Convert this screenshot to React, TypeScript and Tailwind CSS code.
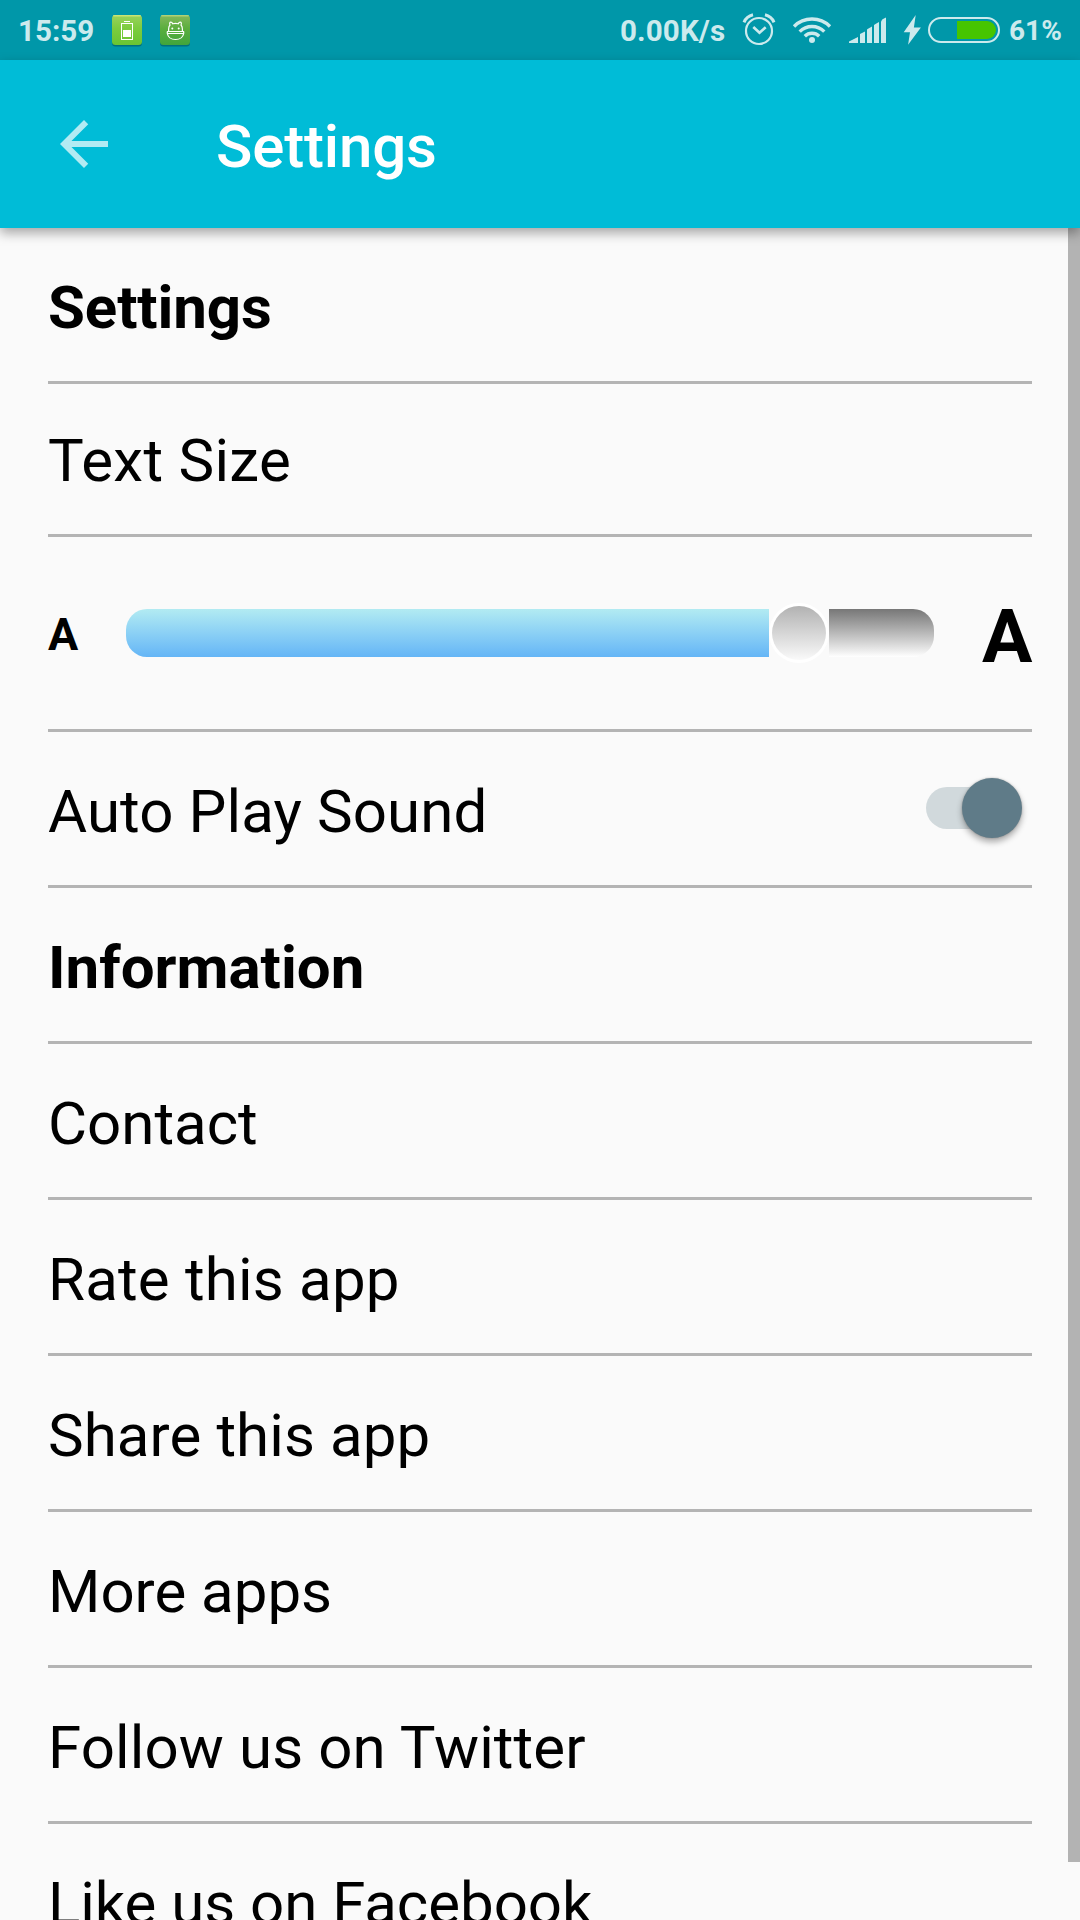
import type { ReactNode } from "react";

const TINT = "#cceaed";

function BatteryAppIcon() {
  return (
    <svg className="ml-[16px] block h-[40px] w-[36px] shrink-0" viewBox="109 10 36 40">
      <defs>
        <linearGradient id="lime" x1="0" y1="0" x2="0" y2="1">
          <stop offset="0" stopColor="#9ad25c" />
          <stop offset="0.45" stopColor="#7ccc3e" />
          <stop offset="1" stopColor="#69c433" />
        </linearGradient>
      </defs>
      <rect x="112" y="16.500" width="30" height="30" rx="3.5" fill="#00505c" opacity="0.55" />
      <rect x="112" y="15" width="30" height="30" rx="3.5" fill="url(#lime)" />
      <rect x="113" y="15" width="28" height="1.4" rx="0.7" fill="#d3e87c" opacity="0.8" />
      <rect x="124" y="21" width="6" height="1" fill="#fff" />
      <rect x="121.5" y="23.5" width="11" height="16" fill="none" stroke="#fff" strokeWidth="1" />
      <rect x="123" y="30" width="8" height="7" fill="#fff" />
    </svg>
  );
}

function AndroidAppIcon() {
  return (
    <svg className="ml-[12px] block h-[40px] w-[36px] shrink-0" viewBox="157 10 36 40">
      <defs>
        <linearGradient id="moss" x1="0" y1="0" x2="0" y2="1">
          <stop offset="0" stopColor="#84b85c" />
          <stop offset="0.45" stopColor="#5bae3e" />
          <stop offset="1" stopColor="#40a53c" />
        </linearGradient>
      </defs>
      <rect x="160" y="16.500" width="30" height="30" rx="3.5" fill="#00505c" opacity="0.55" />
      <rect x="160" y="15" width="30" height="30" rx="3.5" fill="url(#moss)" />
      <rect x="161" y="15" width="28" height="1.4" rx="0.7" fill="#c3dc80" opacity="0.7" />
      <g fill="none" stroke="#fff" strokeWidth="1.2">
        <path d="M168.600 31.500v-2.500c0-1.500.5-3 1.400-4-.8-1.500-.3-2.800.8-2.800.9 0 1.500.6 1.900 1.600 1.600-.5 4-.5 5.600 0 .4-1 1-1.600 1.900-1.600 1.100 0 1.600 1.300.8 2.800.9 1 1.400 2.500 1.400 4v2.500" />
        <path d="M167 31.500h17M167 33.500h17" />
        <path d="M167.300 31.500v2c.8 4 4 6 8.200 6s7.400-2 8.200-6v-2" />
      </g>
      <circle cx="172.300" cy="28.500" r="1" fill="#fff" />
      <circle cx="178.700" cy="28.500" r="1" fill="#fff" />
    </svg>
  );
}

function AlarmIcon() {
  return (
    <svg className="ml-[17px] block h-[34px] w-[34px] shrink-0" viewBox="742 13 34 34" fill="none" stroke={TINT}>
      <circle cx="759" cy="31" r="13" strokeWidth="2.200" />
      <path d="M753.300 27l6.200 5.800 6.200-5.500" strokeWidth="2.600" />
      <path d="M744 22.300c1.500-3.500 5-6.600 9-7.500M774 22.300c-1.500-3.500-5-6.600-9-7.500" strokeWidth="3" />
    </svg>
  );
}

function WifiIcon() {
  return (
    <svg className="ml-[16px] block h-[30px] w-[40px] shrink-0" viewBox="792 15 40 30" fill="none" stroke={TINT} strokeWidth="3.400">
      <path d="M794 26.500a25.500 25.500 0 0 1 36 0" />
      <path d="M799.700 31.600a17.400 17.400 0 0 1 24.600 0" />
      <path d="M804.800 36.300a10.200 10.200 0 0 1 14.400 0" />
      <circle cx="812" cy="40" r="3" fill={TINT} stroke="none" />
    </svg>
  );
}

function SignalIcon() {
  return (
    <svg className="ml-[17px] block h-[26px] w-[38px] shrink-0" viewBox="849 17 38 26" fill={TINT}>
      <path d="M849 43v-1.600l9-4.400v6z" />
      <path d="M860 43v-9l1.500-.7 3.500-1.800V43z" />
      <path d="M867 43V29.500l1.500-1.100 3.500-1.800V43z" />
      <path d="M874 43V25l1.500-1.100 3.500-1.800V43z" />
      <path d="M881 43V21.500l1.500-2.300 3.500-1.600V43z" />
    </svg>
  );
}

function BoltIcon() {
  return (
    <svg className="ml-[16px] block h-[30px] w-[18px] shrink-0" viewBox="903 15 18 30" fill={TINT}>
      <path d="M915.700 15L903.700 32.200h6.300l-1.900 12.600L920.900 27.600h-7z" />
    </svg>
  );
}

function BatteryIcon() {
  return (
    <svg className="ml-[7px] block h-[26px] w-[72px] shrink-0" viewBox="928 17 72 26">
      <rect x="929" y="18" width="70" height="24" rx="12" fill="none" stroke={TINT} strokeWidth="2" />
      <path d="M957 21h30a9 9 0 0 1 0 18h-30z" fill="#46c500" />
    </svg>
  );
}

function StatusBar() {
  return (
    <div className="flex h-[60px] items-center justify-between bg-[#0097a9] pl-[18px] pr-[18px] font-bold leading-[40px] text-[#cceaed]">
      <div className="flex h-[60px] items-center">
        <span className="mt-[2px] w-[75px] whitespace-nowrap text-[29.6px]">15:59</span>
        <BatteryAppIcon />
        <AndroidAppIcon />
      </div>
      <div className="flex h-[60px] items-center">
        <span className="mt-[2px] w-[105px] whitespace-nowrap text-[29.6px] tracking-[0.1px]">0.00K/s</span>
        <AlarmIcon />
        <WifiIcon />
        <SignalIcon />
        <BoltIcon />
        <BatteryIcon />
        <span className="ml-[9px] mt-[2px] w-[53px] whitespace-nowrap text-[28px]">61%</span>
      </div>
    </div>
  );
}

function AppBar() {
  return (
    <header className="relative z-10 flex h-[168px] bg-[#00bcd7] shadow-[0_5px_11px_rgba(0,0,0,0.34)]">
      <svg className="ml-[60px] mt-[60px] block h-[48px] w-[48px]" viewBox="0 0 16 16" fill="#b2ebf3">
        <path d="M16 7H3.830l5.590-5.590L8 0 0 8l8 8 1.410-1.410L3.830 9H16z" />
      </svg>
      <h1 className="ml-[108px] mt-[52px] text-[60px] font-medium leading-[70px] tracking-[-0.15px] text-white">
        Settings
      </h1>
    </header>
  );
}

function Row({ label, className = "font-normal", children }: { label: string; className?: string; children?: ReactNode }) {
  return (
    <div className="flex h-[156px] shrink-0 justify-between border-b-[3px] border-[#b4b4b4] pt-[45px]">
      <span className={className}>{label}</span>
      {children}
    </div>
  );
}

function Toggle() {
  return (
    <div className="relative mr-[10px] mt-[10px] h-[42px] w-[96px]">
      <div className="h-[42px] w-[75px] rounded-full bg-[#d1d9dc]" />
      <div className="absolute right-[0.4px] top-[-8.6px] size-[60px] rounded-full bg-[#5f7b88] shadow-[0_4px_6px_rgba(0,0,0,0.32),0_0_2px_rgba(0,0,0,0.25)]" />
    </div>
  );
}

function TextSizeSlider() {
  return (
    <div className="flex h-[195px] shrink-0 border-b-[3px] border-[#b4b4b4]">
      <span className="mt-[71px] w-[30px] text-[45px] font-bold leading-[53px]">A</span>
      <div className="ml-[48px] mt-[66px] flex h-[60px] w-[808px] items-center">
        <div className="h-[48px] w-[643px] rounded-l-[21px] bg-linear-to-b from-[#b2ebf2] to-[#64b5f6]" />
        <div className="size-[60px] rounded-full bg-white p-[3px]">
          <div className="size-[54px] rounded-full bg-linear-to-b from-[#b2b2b2] to-[#fafafa]" />
        </div>
        <div className="h-[48px] w-[105px] rounded-r-[21px] bg-linear-to-b from-[#777777] to-white" />
      </div>
      <span className="ml-[48px] mt-[55px] text-[75px] font-bold leading-[88px]">A</span>
    </div>
  );
}

const LINKS = [
  { label: "Contact", className: "font-normal" },
  { label: "Rate this app", className: "font-normal tracking-[0.2px]" },
  { label: "Share this app", className: "font-normal tracking-[0.1px]" },
  { label: "More apps", className: "font-normal" },
  { label: "Follow us on Twitter", className: "font-normal tracking-[0.12px]" },
  { label: "Like us on Facebook", className: "font-normal tracking-[-0.04px]" },
];

export default function App() {
  return (
    <div className="flex h-[1920px] w-[1080px] flex-col overflow-hidden bg-[#fafafa] font-['Roboto',sans-serif] text-black">
      <StatusBar />
      <AppBar />
      <div className="flex h-[1692px] overflow-hidden">
        <main className="ml-[48px] flex w-[984px] flex-col text-[60px] leading-[70px]">
          <Row label="Settings" className="font-bold tracking-[-0.1px]" />
          <div className="h-[153px] shrink-0 border-b-[3px] border-[#b4b4b4] pt-[42px] tracking-[0.3px]">Text Size</div>
          <TextSizeSlider />
          <Row label="Auto Play Sound" className="font-normal tracking-[0.1px]">
            <Toggle />
          </Row>
          <Row label="Information" className="font-bold" />
          {LINKS.map((link) => (
            <Row key={link.label} label={link.label} className={link.className} />
          ))}
        </main>
        <div className="ml-auto h-[1634px] w-[12px] bg-[#b3b3b3]" />
      </div>
    </div>
  );
}
